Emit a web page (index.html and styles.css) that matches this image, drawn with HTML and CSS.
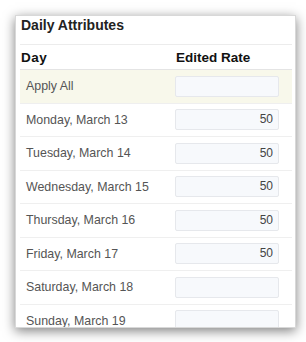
FILE: index.html
```html
<!DOCTYPE html>
<html>
<head>
<meta charset="utf-8">
<link rel="stylesheet" href="styles.css">
</head>
<body>
<div class="card">
  <div class="title">Daily Attributes</div>
  <div class="head">
    <div class="hday">Day</div>
    <div class="hrate">Edited Rate</div>
  </div>
  <div class="row apply"><div class="day">Apply All</div><div class="inp"></div></div>
  <div class="row"><div class="day">Monday, March 13</div><div class="inp">50</div></div>
  <div class="row"><div class="day">Tuesday, March 14</div><div class="inp">50</div></div>
  <div class="row"><div class="day">Wednesday, March 15</div><div class="inp">50</div></div>
  <div class="row"><div class="day">Thursday, March 16</div><div class="inp">50</div></div>
  <div class="row"><div class="day">Friday, March 17</div><div class="inp">50</div></div>
  <div class="row"><div class="day">Saturday, March 18</div><div class="inp"></div></div>
  <div class="row"><div class="day">Sunday, March 19</div><div class="inp"></div></div>
</div>
</body>
</html>
```
FILE: styles.css
```css
html, body {
  margin: 0;
  background: #fff;
}
body {
  padding: 15px;
  font-family: "Liberation Sans", Arial, sans-serif;
}
.card {
  width: 272px;
  height: 311px;
  overflow: hidden;
  background: #fff;
  border: 1px solid #d8d8d8;
  box-shadow: 0 3px 11px rgba(0, 0, 0, 0.5);
  padding: 0 3px 0 4px;
}
.title {
  height: 29px;
  padding: 2px 0 0 1px;
  box-sizing: border-box;
  font-size: 14px;
  font-weight: bold;
  line-height: 15px;
  color: #222;
  border-bottom: 1px solid #ececec;
}
.head {
  display: grid;
  grid-template-columns: 155px 1fr;
  height: 24px;
  align-items: center;
  border-bottom: 1px solid #e4e4e4;
  font-size: 13.5px;
  font-weight: bold;
  color: #111;
}
.hday {
  padding-left: 1px;
  letter-spacing: 0.5px;
}
.hrate {
  padding-left: 1px;
}
.row {
  display: grid;
  grid-template-columns: 155px 104px;
  height: 32.5px;
  align-items: center;
  border-bottom: 1px solid #efefef;
  font-size: 12.4px;
  color: #555;
}
.row.apply {
  background: #f8f8eb;
}
.day {
  padding-left: 6px;
}
.inp {
  height: 19px;
  border: 1px solid #e6e8ec;
  border-radius: 2px;
  background: #f7f9fc;
  text-align: right;
  padding-right: 5px;
  line-height: 19px;
  font-size: 12px;
  color: #444;
}
```
